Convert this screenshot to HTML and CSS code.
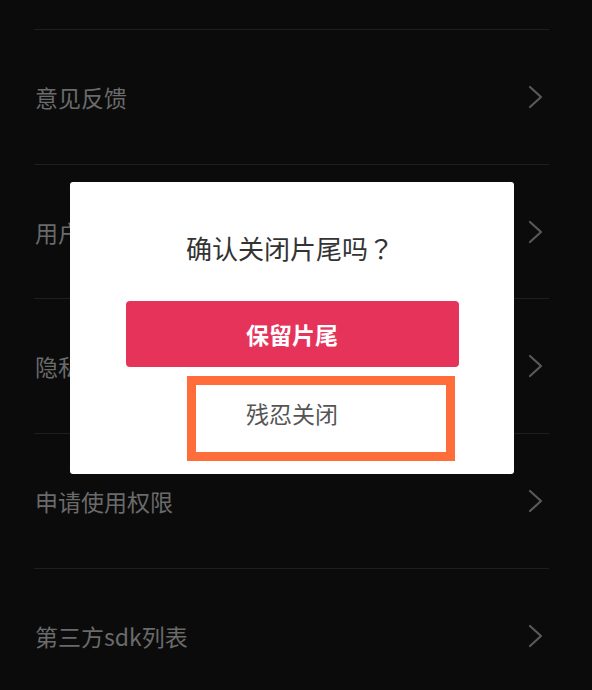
FILE: index.html
```html
<!DOCTYPE html>
<html lang="zh-CN">
<head>
<meta charset="utf-8">
<title>设置</title>
<link rel="stylesheet" href="styles.css">
</head>
<body>
<div class="page">
  <ul class="menu">
    <li class="row"><span class="label">意见反馈</span><svg class="chev" viewBox="0 0 16 24"><polyline points="3,2 14,12 3,22"/></svg></li>
    <li class="row"><span class="label">用户协议</span><svg class="chev" viewBox="0 0 16 24"><polyline points="3,2 14,12 3,22"/></svg></li>
    <li class="row"><span class="label">隐私政策</span><svg class="chev" viewBox="0 0 16 24"><polyline points="3,2 14,12 3,22"/></svg></li>
    <li class="row"><span class="label">申请使用权限</span><svg class="chev" viewBox="0 0 16 24"><polyline points="3,2 14,12 3,22"/></svg></li>
    <li class="row"><span class="label">第三方sdk列表</span><svg class="chev" viewBox="0 0 16 24"><polyline points="3,2 14,12 3,22"/></svg></li>
  </ul>

  <div class="dialog">
    <div class="title">确认关闭片尾吗<span class="qmark">？</span></div>
    <button class="btn-keep">保留片尾</button>
    <button class="btn-close">残忍关闭</button>
    <div class="highlight"></div>
  </div>
</div>
</body>
</html>
```

FILE: styles.css
```css
* { box-sizing: border-box; }
html, body {
  margin: 0;
  padding: 0;
  background: #0b0b0b;
}
body {
  font-family: "Noto Sans CJK SC", "Noto Sans", sans-serif;
  width: 592px;
  height: 690px;
  overflow: hidden;
}
.page {
  position: relative;
  width: 592px;
  height: 690px;
}
.menu {
  list-style: none;
  margin: 0;
  padding: 29px 43px 0 34px;
}
.row {
  height: 134.7px;
  border-top: 1px solid #1f1f1f;
  display: flex;
  align-items: center;
  justify-content: space-between;
}
.label {
  color: #6a6a6a;
  font-size: 23px;
  line-height: 30px;
  padding-left: 1px;
}
.chev {
  width: 16px;
  height: 24px;
  margin-right: 6px;
}
.chev polyline {
  fill: none;
  stroke: #595959;
  stroke-width: 2.2;
  stroke-linecap: round;
  stroke-linejoin: round;
}
.dialog {
  position: absolute;
  left: 70px;
  top: 182px;
  width: 444px;
  height: 292px;
  background: #ffffff;
  border-radius: 3px;
  display: flex;
  flex-direction: column;
  align-items: center;
  padding-top: 48px;
}
.title {
  font-size: 26px;
  line-height: 36px;
  color: #333333;
  text-align: center;
  padding-right: 4px;
  white-space: nowrap;
}
.qmark {
  font-family: "Noto Sans CJK JP", "Noto Sans CJK SC", sans-serif;
  display: inline-block;
  width: 1em;
  text-align: center;
}
.btn-keep {
  margin-top: 35px;
  width: 333px;
  height: 66px;
  border: none;
  border-radius: 4px;
  background: #e6335a;
  color: #ffffff;
  font-family: inherit;
  font-size: 23px;
  font-weight: 700;
  padding: 0;
}
.btn-close {
  margin-top: 13px;
  width: 333px;
  height: 66px;
  border: none;
  background: transparent;
  color: #555555;
  font-family: inherit;
  font-size: 23px;
  padding: 0;
}
.highlight {
  position: absolute;
  left: 117px;
  top: 194px;
  width: 268px;
  height: 85px;
  border: 9px solid #fe6d3a;
}
```
